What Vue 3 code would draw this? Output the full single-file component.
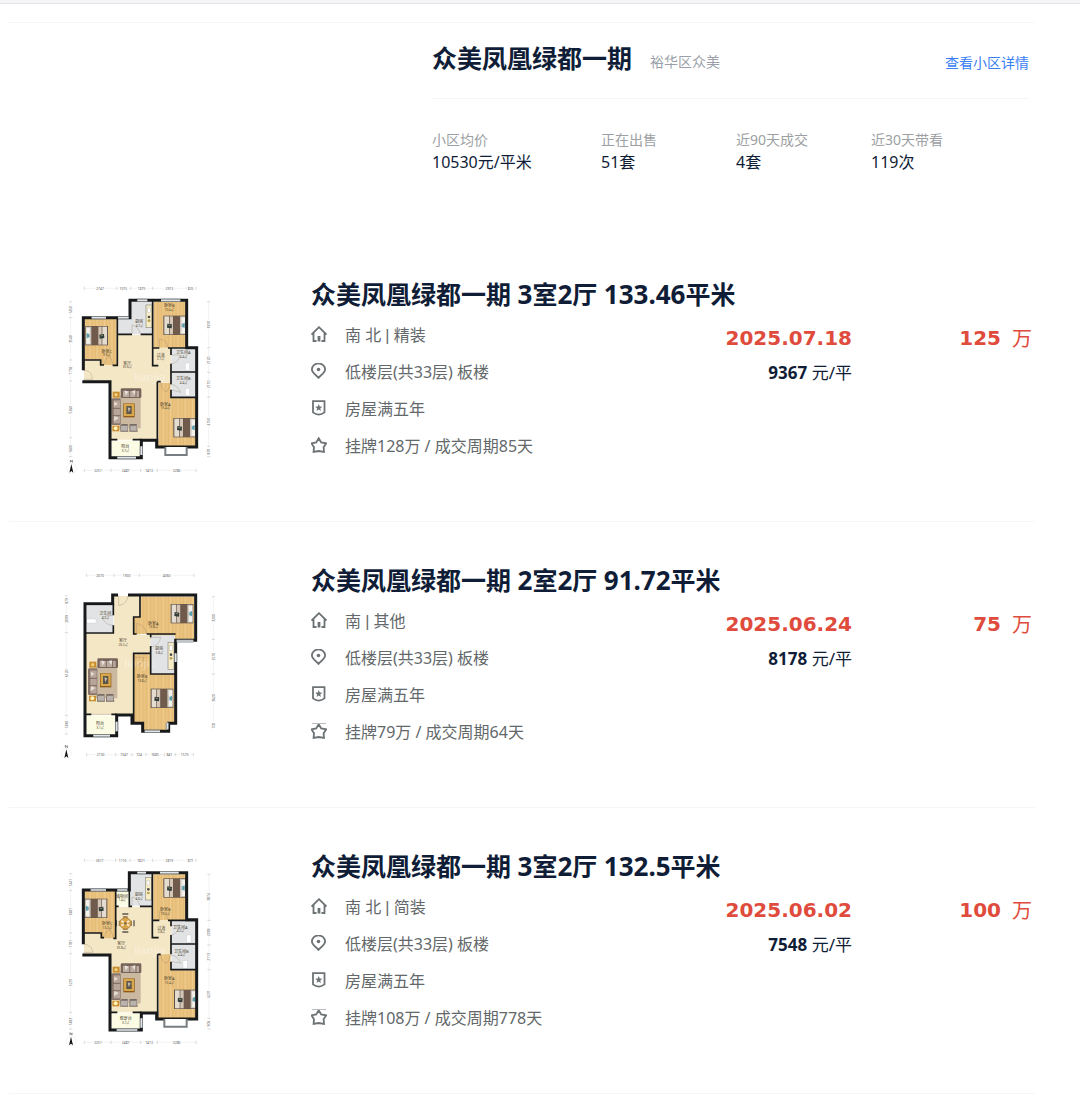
<script setup>
const stats = [
  { label: '小区均价', value: '10530元/平米' },
  { label: '正在出售', value: '51套' },
  { label: '近90天成交', value: '4套' },
  { label: '近30天带看', value: '119次' },
]

const WOOD = 'url(#wood)'
const TILE = '#e1e3e4'
const FLOOR = '#f4e7c6'
const BALCONY = '#fcfce4'

const planA = {
  top: 0,
  floors: [
    { fill: FLOOR, d: 'M102 254H202V180H310V218H363V322H322V494H182V320H102Z' },
    { fill: WOOD, d: 'M104 130H200V270H154V254H104Z' },
    { fill: TILE, d: 'M204 130H242V80H308V178H204Z' },
    { fill: WOOD, d: 'M311 80H408V218H311Z' },
    { fill: TILE, d: 'M364 220H438V366H364Z' },
    { fill: WOOD, d: 'M325 323H362V368H438V514H325Z' },
    { fill: BALCONY, d: 'M184 497H271V546H184Z' },
  ],
  outer: 'M100 286V128H240V76H410V218H440V516H320V496H274V548H180V320H97',
  inner: 'M202 128V271H188M100 255H152V270H162M202 178H246M272 178H310M308 76V272H325M308 219H328M354 219H440M363 219V240M363 266V328M363 291H440M363 344V367H440M322 320V516M322 320H332M180 494H202M248 494H274',
  windows: 'M125 128H168M262 76H292M333 76H391M204 128H236M202 548H258M274 514V540',
  bay: 'M346 516V540H410V516',
  doors: 'M100 287H110Q126 290 127 313H100M162 270Q166 244 180 244Q188 258 188 270M246 178V150Q264 152 272 178M328 218V193Q352 193 353 218M363 240Q384 240 390 241Q384 266 363 266M332 320Q334 346 350 350Q360 340 361 322M363 328Q382 330 392 352L363 344',
  beds: [
    { x: 340, y: 122, flip: false },
    { x: 174, y: 153, flip: true },
    { x: 370, y: 429, flip: false },
  ],
  lounge: { x: 184, y: 338 },
  counter: { x: 288, y: 90, h: 68 },
  basins: [{ x: 406, y: 264 }, { x: 406, y: 340 }],
  labels: [
    { x: 358, y: 96, t: '卧室B', a: '10.4㎡' },
    { x: 268, y: 144, t: '厨房', a: '4.7㎡' },
    { x: 170, y: 233, t: '卧室C', a: '9.9㎡' },
    { x: 332, y: 245, t: '过道', a: '2.7㎡' },
    { x: 400, y: 238, t: '卫生间A', a: '4.4㎡' },
    { x: 400, y: 315, t: '卫生间B', a: '4.4㎡' },
    { x: 232, y: 269, t: '客厅', a: '35.6㎡' },
    { x: 346, y: 392, t: '卧室A', a: '15.4㎡' },
    { x: 226, y: 520, t: '阳台', a: '3.7㎡' },
  ],
  across: [
    { y: 40, from: 103, to: 438, ticks: [200, 242, 308, 410], texts: [[150, '2747'], [220, '1015'], [275, '1875'], [358, '2913'], [422, '825']] },
    { y: 586, from: 103, to: 438, ticks: [183, 272, 322], texts: [[144, '2251'], [227, '2487'], [297, '1413'], [380, '3286']] },
  ],
  down: [
    { x: 62, from: 80, to: 545, ticks: [128, 255, 318, 488], texts: [[105, '1450'], [192, '3540'], [286, '1792'], [404, '5260'], [522, '1600']] },
    { x: 476, from: 80, to: 545, ticks: [218, 292, 366, 514], texts: [[149, '3910'], [256, '2120'], [328, '2110'], [440, '4150'], [530, '870']] },
  ],
  north: { x: 64, y: 580 },
  mark: { x: 300, y: 318 },
}

const planB = {
  top: 3,
  floors: [
    { fill: FLOOR, d: 'M108 218H192V108H270V225H302V280H250V464H108Z' },
    { fill: TILE, d: 'M110 138H190V217H110Z' },
    { fill: WOOD, d: 'M272 110H432V238H300V222H252V170H272Z' },
    { fill: TILE, d: 'M302 226H375V340H302Z' },
    { fill: WOOD, d: 'M252 283H300V342H373V486H352V510H280V486H252Z' },
    { fill: BALCONY, d: 'M110 467H196V523H110Z' },
  ],
  outer: 'M204 105H188V131H105V527H200V465H246V490H278V514H356V490H377V241H437V105H234',
  inner: 'M190 131V166M190 196V219H108M270 105V171H251V222H260M290 222H377M302 222V232M302 258V280H251V490M302 280V342H377M105 463H124M184 463H200',
  windows: 'M130 527H180M200 485V514M380 243H430M377 280V306M284 514H330M352 488V508',
  bay: '',
  doors: 'M206 105V137Q232 132 234 107M190 166Q164 166 156 172Q166 196 190 196M260 222V190Q284 194 290 222M302 232H332Q328 256 302 262M252 292H282Q278 314 252 320M124 463H184',
  beds: [
    { x: 362, y: 132, flip: false },
    { x: 302, y: 386, flip: false },
  ],
  lounge: { x: 114, y: 293 },
  counter: { x: 354, y: 248, h: 80 },
  basins: [],
  labels: [
    { x: 166, y: 165, t: '卫生间', a: '4.2㎡' },
    { x: 310, y: 194, t: '卧室A', a: '13.8㎡' },
    { x: 219, y: 247, t: '客厅', a: '26.2㎡' },
    { x: 328, y: 271, t: '厨房', a: '5.8㎡' },
    { x: 276, y: 355, t: '卧室B', a: '13.8㎡' },
    { x: 150, y: 496, t: '阳台', a: '3.1㎡' },
  ],
  across: [
    { y: 46, from: 110, to: 432, ticks: [192, 268], texts: [[150, '2070'], [230, '1903'], [350, '4060']] },
    { y: 584, from: 110, to: 430, ticks: [197, 246, 288, 344, 376], texts: [[152, '2130'], [222, '1347'], [267, '724'], [315, '1685'], [358, '841'], [404, '1573']] },
  ],
  down: [
    { x: 49, from: 108, to: 522, ticks: [134, 218, 466], texts: [[123, '879'], [177, '2099'], [340, '6120'], [494, '1490']] },
    { x: 490, from: 110, to: 505, ticks: [238, 342, 488], texts: [[174, '3200'], [290, '2570'], [414, '3620'], [497, '700']] },
  ],
  north: { x: 49, y: 581 },
  mark: { x: 270, y: 322 },
}

const planC = {
  top: 6,
  floors: [
    { fill: FLOOR, d: 'M102 264H196V185H308V225H363V330H322V502H182V330H102Z' },
    { fill: WOOD, d: 'M104 138H195V280H154V264H104Z' },
    { fill: BALCONY, d: 'M199 138H238V182H199Z' },
    { fill: TILE, d: 'M242 88H306V182H242Z' },
    { fill: WOOD, d: 'M310 88H408V225H310Z' },
    { fill: TILE, d: 'M364 226H438V373H364Z' },
    { fill: WOOD, d: 'M326 328H362V376H438V520H326Z' },
    { fill: BALCONY, d: 'M184 504H271V553H184Z' },
  ],
  outer: 'M100 298V135H238V83H410V224H440V522H320V504H274V555H180V330H97',
  inner: 'M197 135V280H190M100 264H154V278H162M197 184H206M238 135V184H246M270 184H308M307 83V278H326M307 226H328M354 226H440M363 226V244M363 270V328M363 297H440M363 350V374H440M323 328V522M323 328H332M180 502H202M248 502H274',
  windows: 'M122 135H168M262 83H288M330 83H386M202 135H232M200 555H262M274 520V548',
  bay: 'M343 522V545H410V522',
  doors: 'M100 296Q128 302 128 322H100M162 280Q166 254 180 254Q188 266 190 280M246 184V156Q264 158 270 184M328 225V200Q352 200 353 225M363 242L390 240Q384 266 363 270M332 328Q334 352 350 355Q360 346 361 330M363 330Q382 332 392 354L363 350',
  beds: [
    { x: 340, y: 100, flip: false },
    { x: 172, y: 161, flip: true },
    { x: 372, y: 434, flip: false },
  ],
  lounge: { x: 184, y: 353 },
  counter: { x: 286, y: 97, h: 68 },
  basins: [{ x: 410, y: 270 }, { x: 399, y: 347 }],
  dining: true,
  labels: [
    { x: 346, y: 199, t: '卧室B', a: '10.2㎡' },
    { x: 267, y: 153, t: '厨房', a: '4.6㎡' },
    { x: 216, y: 158, t: '储物间', a: '1.4㎡' },
    { x: 172, y: 241, t: '卧室C', a: '10.2㎡' },
    { x: 334, y: 254, t: '过道', a: '2.8㎡' },
    { x: 391, y: 251, t: '卫生间A', a: '4.2㎡' },
    { x: 394, y: 323, t: '卫生间B', a: '4.4㎡' },
    { x: 214, y: 301, t: '客厅', a: '35.8㎡' },
    { x: 358, y: 405, t: '卧室A', a: '15.4㎡' },
    { x: 227, y: 525, t: '观景台', a: '3.7㎡' },
  ],
  across: [
    { y: 46, from: 103, to: 438, ticks: [197, 240, 308, 410], texts: [[149, '2617'], [218, '1110'], [273, '1821'], [358, '2819'], [422, '871']] },
    { y: 592, from: 103, to: 438, ticks: [183, 272, 322], texts: [[144, '2251'], [227, '2487'], [297, '1413'], [380, '3286']] },
  ],
  down: [
    { x: 62, from: 86, to: 552, ticks: [137, 264, 326, 502], texts: [[113, '1441'], [200, '3487'], [296, '1781'], [412, '5231'], [530, '1483']] },
    { x: 477, from: 88, to: 552, ticks: [226, 300, 374, 520], texts: [[156, '3874'], [262, '2009'], [336, '2113'], [448, '4231'], [536, '906']] },
  ],
  north: { x: 63, y: 588 },
  mark: { x: 300, y: 328 },
}

const deals = [
  {
    bedrooms: '3', halls: '2', area: '133.46', facing: '南 北', finish: '精装',
    floor: '低楼层(共33层) 板楼', years: '房屋满五年', cycle: '挂牌128万 / 成交周期85天',
    date: '2025.07.18', unit: '9367', total: '125', plan: planA,
  },
  {
    bedrooms: '2', halls: '2', area: '91.72', facing: '南', finish: '其他',
    floor: '低楼层(共33层) 板楼', years: '房屋满五年', cycle: '挂牌79万 / 成交周期64天',
    date: '2025.06.24', unit: '8178', total: '75', plan: planB,
  },
  {
    bedrooms: '3', halls: '2', area: '132.5', facing: '南 北', finish: '简装',
    floor: '低楼层(共33层) 板楼', years: '房屋满五年', cycle: '挂牌108万 / 成交周期778天',
    date: '2025.06.02', unit: '7548', total: '100', plan: planC,
  },
]
</script>

<template>
  <svg class="symbols" width="0" height="0" aria-hidden="true">
    <defs>
      <pattern id="wood" width="22" height="90" patternUnits="userSpaceOnUse">
        <rect width="22" height="90" fill="#e9c27f" />
        <path d="M4 0V90M15 0V90" stroke="#e2b66d" stroke-width="2" />
        <path d="M10 0V90" stroke="#efcc8e" stroke-width="3" />
      </pattern>
      <g id="bed">
        <rect x="0" y="0" width="68" height="58" fill="#62554c" />
        <rect x="3" y="2" width="14" height="54" fill="#e5dcd0" />
        <rect x="19" y="2" width="10" height="54" fill="#d5c6b5" />
        <rect x="30" y="1" width="20" height="56" fill="#6f5a4b" />
        <rect x="50" y="2" width="16" height="54" fill="#c9c3bb" />
        <path d="M54 5H65V26L55 24ZM55 34L65 31V53H54Z" fill="#f4f1ea" />
        <path d="M57 24L64 21V37L56 34Z" fill="#5b9fae" />
        <path d="M12 24L26 26L25 38L11 36Z" fill="#2e3b3a" />
        <path d="M15 28L22 30" stroke="#bfae7a" stroke-width="2" />
      </g>
      <g id="lounge">
        <rect x="24" y="24" width="64" height="98" fill="#cbb8a1" />
        <rect x="4" y="12" width="21" height="18" fill="#c98d31" />
        <circle cx="14" cy="21" r="5" fill="#efd27b" />
        <rect x="3" y="114" width="21" height="17" fill="#c98d31" />
        <circle cx="13" cy="122" r="6" fill="#fff0b4" />
        <rect x="28" y="2" width="62" height="29" rx="4" fill="#77645a" />
        <path d="M35 10H83V28H35Z" fill="#bcaca0" />
        <path d="M40 8L51 12L43 24ZM62 10L73 8L70 22Z" fill="#e9e2dc" />
        <path d="M55 9V29M74 9V29" stroke="#5f4c44" stroke-width="2" />
        <rect x="0" y="32" width="28" height="80" rx="4" fill="#87746a" />
        <path d="M7 38H26V107H7Z" fill="#b7a599" />
        <path d="M8 42L20 48L9 56ZM9 84L22 91L8 101Z" fill="#e6ddd4" />
        <path d="M5 62H27M5 84H27" stroke="#5f4c44" stroke-width="2" />
        <rect x="36" y="47" width="34" height="42" fill="#8c5b19" />
        <rect x="38" y="48" width="30" height="37" fill="#d8a64b" />
        <path d="M45 55H61V79H45Z" fill="#5b554c" />
        <path d="M49 59L58 62L52 74Z" fill="#c3b9a7" />
        <path d="M27 112L32 109H49L51 132H27ZM55 109H76L79 132H54Z" fill="#776b65" />
        <path d="M29 114H49V129H29ZM57 114H76V129H57Z" fill="#bab2ad" />
      </g>
    </defs>
  </svg>

  <div class="strip"></div>
  <main class="page">
    <header class="community">
      <div class="heading">
        <h1>众美凤凰绿都一期</h1>
        <span class="district">裕华区众美</span>
        <a href="#detail">查看小区详情</a>
      </div>
      <dl class="stats">
        <div v-for="s in stats" :key="s.label">
          <dt>{{ s.label }}</dt>
          <dd>{{ s.value }}</dd>
        </div>
      </dl>
    </header>

    <article v-for="deal in deals" :key="deal.date" class="deal">
      <svg class="plan" :viewBox="`0 ${deal.plan.top} 540 630`" role="img" aria-label="户型图">
        <path v-for="(f, i) in deal.plan.floors" :key="'f' + i" :d="f.d" :fill="f.fill" />
        <g :transform="`translate(${deal.plan.counter.x} ${deal.plan.counter.y})`">
          <rect width="18" :height="deal.plan.counter.h" fill="#f6ecc5" stroke="#8e8b83" stroke-width="2" />
          <rect x="5" y="9" width="8" height="14" fill="#fff" stroke="#aaa" />
          <circle cx="9" cy="36" r="4" fill="#4e4e4e" />
          <circle cx="9" cy="47" r="4" fill="#b69b4d" />
        </g>
        <rect v-for="(b, i) in deal.plan.basins" :key="'s' + i" :x="b.x" :y="b.y" width="13" height="22" fill="#fff" stroke="#c3c5c6" />
        <rect v-if="deal.plan === planB" x="110" y="177" width="28" height="12" fill="#fff" stroke="#c3c5c6" />
        <use href="#lounge" :x="deal.plan.lounge.x" :y="deal.plan.lounge.y" />
        <use
          v-for="(b, i) in deal.plan.beds"
          :key="'b' + i"
          href="#bed"
          :transform="`translate(${b.x} ${b.y})${b.flip ? ' scale(-1 1)' : ''}`"
        />
        <g v-if="deal.plan.dining" transform="translate(226 235)">
          <path d="M-9 -28H9M-9 26H9M-27 -9V9M26 -9V9" stroke="#5c564e" stroke-width="4" />
          <path d="M-7 -22H7V20H-7ZM-20 -8H20V8H-20Z" fill="#a58a63" />
          <circle r="17" fill="#d9a54c" stroke="#a9752b" stroke-width="2" />
          <path d="M-12 -7L-5 -3M12 -7L5 -3M-12 7L-5 3M12 7L5 3" stroke="#f8efd9" stroke-width="5" />
          <circle r="4" fill="#8d6f45" />
        </g>
        <path :d="deal.plan.doors" fill="none" stroke="#92836a" stroke-width="1" />
        <text class="watermark" :x="deal.plan.mark.x" :y="deal.plan.mark.y">lianjia</text>
        <path :d="deal.plan.inner" fill="none" stroke="#17191b" stroke-width="5" />
        <path :d="deal.plan.outer" fill="none" stroke="#17191b" stroke-width="9" />
        <path :d="deal.plan.windows" fill="none" stroke="#8e9599" stroke-width="9" />
        <path :d="deal.plan.windows" fill="none" stroke="#f3f5f5" stroke-width="3" />
        <path v-if="deal.plan.bay" :d="deal.plan.bay" fill="#fff" stroke="#777d80" stroke-width="6" />
        <g v-for="(l, i) in deal.plan.labels" :key="'l' + i" class="label">
          <text :x="l.x" :y="l.y">{{ l.t }}</text>
          <text class="area" :x="l.x" :y="l.y + 11">{{ l.a }}</text>
        </g>
        <g v-for="(r, i) in deal.plan.across" :key="'a' + i" class="measure">
          <path :d="`M${r.from} ${r.y}H${r.to}`" stroke="#dcdcdc" />
          <path v-for="t in [r.from, ...r.ticks, r.to]" :key="t" :d="`M${t} ${r.y - 5}V${r.y + 5}`" stroke="#999" />
          <g v-for="t in r.texts" :key="t[0]">
            <rect :x="t[0] - 13" :y="r.y - 5" width="26" height="10" fill="#fff" />
            <text :x="t[0]" :y="r.y + 4">{{ t[1] }}</text>
          </g>
        </g>
        <g v-for="(r, i) in deal.plan.down" :key="'d' + i" class="measure">
          <path :d="`M${r.x} ${r.from}V${r.to}`" stroke="#dcdcdc" />
          <path v-for="t in [r.from, ...r.ticks, r.to]" :key="t" :d="`M${r.x - 5} ${t}H${r.x + 5}`" stroke="#999" />
          <g v-for="t in r.texts" :key="t[0]" :transform="`translate(${r.x} ${t[0]}) rotate(-90)`">
            <rect x="-13" y="-5" width="26" height="10" fill="#fff" />
            <text y="4">{{ t[1] }}</text>
          </g>
        </g>
        <g :transform="`translate(${deal.plan.north.x} ${deal.plan.north.y})`">
          <circle r="15" fill="#fff" stroke="#dadada" />
          <path d="M0 -13L6 13L0 8L-6 13Z" fill="#161616" />
          <path d="M-3 -18V-25L3 -18V-25" fill="none" stroke="#555" stroke-width="2" />
        </g>
      </svg>

      <div class="info">
        <h2>众美凤凰绿都一期 <b>{{ deal.bedrooms }}</b>室<b>{{ deal.halls }}</b>厅 <b>{{ deal.area }}</b>平米</h2>
        <div class="body">
          <ul>
            <li>
              <svg viewBox="0 0 16 16" aria-hidden="true">
                <path d="M0.500 8.500L8 1.200L15.500 8.500M2.500 7V15H5.500M13.500 7V15H10.500" />
                <path d="M8 10V15.500" stroke-width="2.800" />
              </svg>
              <span>{{ deal.facing }} <i>|</i> {{ deal.finish }}</span>
            </li>
            <li>
              <svg viewBox="0 0 16 16" aria-hidden="true">
                <path d="M7.500 14.800C5.500 12.400 0.900 9.800 0.900 6.500A6.600 6.100 0 0 1 14.100 6.500C14.100 9.800 9.500 12.400 7.500 14.800Z" />
                <circle cx="7.500" cy="6.500" r="1.800" fill="#6d7375" stroke="none" />
              </svg>
              <span>{{ deal.floor }}</span>
            </li>
            <li>
              <svg viewBox="0 0 16 16" aria-hidden="true">
                <path d="M2 1.200H13.500V12.400Q10.700 14.600 7.750 14.600Q4.800 14.600 2 12.400Z" />
                <path d="M7.750 4L8.750 6.500L11.300 6.700L9.300 8.400L9.900 11L7.750 9.600L5.600 11L6.200 8.400L4.200 6.700L6.750 6.500Z" fill="#6d7375" stroke="none" />
              </svg>
              <span>{{ deal.years }}</span>
            </li>
            <li>
              <svg viewBox="0 0 16 16" aria-hidden="true">
                <path d="M7.700 1.200L10.200 5.400L15.200 6.300L12.600 10.200L13 14.900L7.700 14L2.600 14.900L3 10.200L0.400 6.300L5.200 5.400Z" />
                <path v-if="deal.plan !== planA" d="M1 0.500H15" stroke="#b9bcbd" stroke-width="1" />
              </svg>
              <span>{{ deal.cycle }}</span>
            </li>
          </ul>
          <div class="closing">
            <time>{{ deal.date }}</time>
            <p><b>{{ deal.unit }}</b> 元/平</p>
          </div>
          <div class="total"><b>{{ deal.total }}</b><span>万</span></div>
        </div>
      </div>
    </article>
  </main>
</template>

<style>
body {
  background: #fff;
}
</style>

<style scoped>
.symbols {
  position: absolute;
}
.strip {
  height: 3px;
  background: #f6f6f9;
  border-bottom: 1px solid #e3e4e8;
}
.page {
  margin: 18px 45px 0 9px;
  border-top: 1px solid #f4f5f6;
  font-family: "Noto Sans", "Noto Sans CJK SC", sans-serif;
  font-size: 16px;
  color: #101d37;
}
h1, h2, dl, dd, ul, p {
  margin: 0;
  padding: 0;
}
h1, h2 {
  font-size: 25px;
  line-height: 38px;
  font-weight: 700;
  white-space: nowrap;
}
h2 b {
  font-size: 26px;
  font-weight: 700;
  line-height: 1;
}
.community {
  box-sizing: border-box;
  min-height: 213px;
  padding: 16px 6px 0 423px;
}
.heading {
  display: flex;
  align-items: center;
  padding-bottom: 21px;
  border-bottom: 1px solid #f4f5f6;
}
.district {
  margin-left: 18px;
  padding-top: 8px;
  font-size: 14px;
  line-height: 20px;
  color: #9a9fa9;
}
.heading a {
  margin-left: auto;
  padding-top: 10px;
  font-size: 14px;
  line-height: 20px;
  color: #3a80f5;
  text-decoration: none;
}
.stats {
  display: grid;
  grid-template-columns: 169px 135px 135px 1fr;
  padding-top: 31px;
}
.stats dt {
  font-size: 14px;
  line-height: 20px;
  color: #9c9fa3;
}
.stats dd {
  line-height: 24px;
}
.deal {
  display: flex;
  padding: 39px 3px 36px 41px;
  border-bottom: 1px solid #f5f6f7;
}
.plan {
  flex: none;
  width: 180px;
  height: 210px;
}
.info {
  flex: 1;
  margin-left: 81px;
}
.body {
  display: flex;
  padding-top: 2px;
}
ul {
  flex: 1;
  list-style: none;
}
li {
  display: flex;
  align-items: center;
  gap: 18px;
  height: 37px;
  color: #63686a;
  white-space: nowrap;
}
li svg {
  width: 16px;
  height: 16px;
  fill: none;
  stroke: #6d7375;
  stroke-width: 1.8;
}
li i {
  font-family: "Liberation Sans", sans-serif;
  font-style: normal;
}
.closing {
  padding-top: 8px;
  text-align: right;
}
time, .total b {
  font: 700 20px/30px "DejaVu Sans", sans-serif;
  color: #df4b3c;
}
time {
  display: block;
}
.closing p {
  margin-top: 8px;
  font-size: 17px;
  line-height: 24px;
}
.total {
  display: flex;
  justify-content: flex-end;
  gap: 11px;
  width: 180px;
  padding-top: 8px;
  font-size: 20px;
  line-height: 32px;
  color: #df4b3c;
}
.label text {
  font-size: 12px;
  fill: #4d4330;
  text-anchor: middle;
}
.label .area {
  font-size: 9px;
}
.measure text {
  font-size: 10px;
  fill: #555;
  text-anchor: middle;
}
.watermark {
  font-size: 34px;
  fill: #fff;
  fill-opacity: 0.4;
  text-anchor: middle;
}
</style>
